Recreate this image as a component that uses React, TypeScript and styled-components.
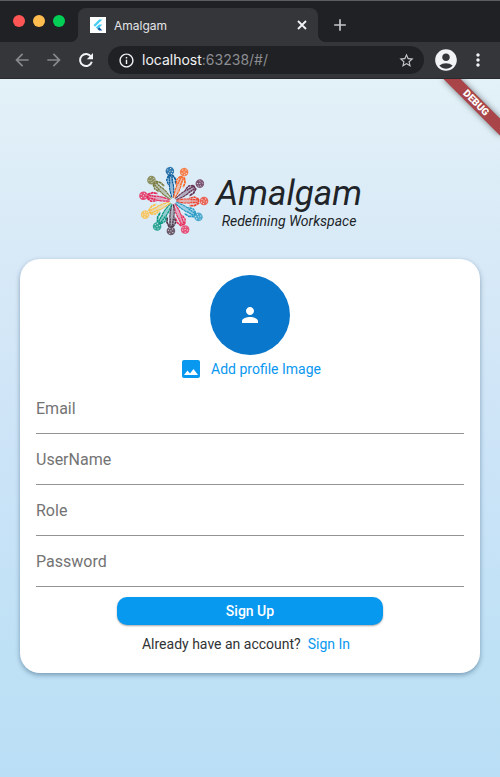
import React, { useState } from "react";
import styled, { createGlobalStyle } from "styled-components";
import {
  MdAccountCircle,
  MdAdd,
  MdArrowBack,
  MdArrowForward,
  MdImage,
  MdInfoOutline,
  MdMoreVert,
  MdPerson,
  MdStarBorder,
} from "react-icons/md";

const GlobalStyle = createGlobalStyle`
  *, *::before, *::after { box-sizing: border-box; }
  body { margin: 0; background: #202124; }
  button, input { font: inherit; color: inherit; margin: 0; }
`;

const Window = styled.div`
  display: flex;
  flex-direction: column;
  min-height: 100vh;
  border-top: 1px solid #5b5d5f;
  font-family: Roboto, sans-serif;
`;

const TabStrip = styled.header`
  display: flex;
  align-items: flex-end;
  height: 41px;
  background: #202124;
  font-family: Inter, sans-serif;
`;

const Lights = styled.div`
  display: flex;
  align-self: center;
  gap: 8px;
  padding: 0 13px 2px;
`;

const Light = styled.button<{ $color: string }>`
  width: 12px;
  height: 12px;
  padding: 0;
  border: 0;
  border-radius: 50%;
  background: ${(p) => p.$color};
`;

const Tab = styled.div`
  position: relative;
  display: flex;
  align-items: center;
  flex: 0 1 240px;
  height: 34px;
  padding: 0 8px 0 12px;
  border-radius: 8px 8px 0 0;
  background: #35363a;
  color: #e4e5e8;
  font-size: 12px;

  &::before,
  &::after {
    content: "";
    position: absolute;
    bottom: 0;
    width: 8px;
    height: 8px;
  }
  &::before {
    right: 100%;
    background: radial-gradient(circle at 0 0, #202124 8px, #35363a 8px);
  }
  &::after {
    left: 100%;
    background: radial-gradient(circle at 100% 0, #202124 8px, #35363a 8px);
  }
`;

const TabTitle = styled.span`
  flex: 1;
  padding-left: 8px;
`;

const IconButton = styled.button<{ $size: number; $color: string }>`
  display: flex;
  flex: none;
  align-items: center;
  justify-content: center;
  width: ${(p) => p.$size}px;
  height: ${(p) => p.$size}px;
  padding: 0;
  border: 0;
  background: none;
  color: ${(p) => p.$color};
`;

const NewTab = styled(IconButton)`
  margin: 0 0 7px 12px;
`;

const Toolbar = styled.nav`
  display: flex;
  align-items: center;
  height: 37px;
  padding: 0 12px;
  border-bottom: 1px solid #292a2d;
  background: #35363a;
  font-family: Inter, sans-serif;
`;

const NavButtons = styled.div`
  display: flex;
  gap: 12px;
  padding-right: 12px;
`;

const AddressBar = styled.div`
  display: flex;
  flex: 1;
  align-items: center;
  min-width: 0;
  height: 28px;
  padding: 0 9px;
  margin-right: 9px;
  border-radius: 14px;
  background: #202124;
`;

const AddressText = styled.button`
  flex: 1;
  padding: 0 0 0 7px;
  border: 0;
  background: none;
  color: #8b8d91;
  font-size: 14px;
  line-height: 20px;
  text-align: left;
`;

const AddressInput = styled.input`
  flex: 1;
  min-width: 0;
  padding: 0 0 0 7px;
  border: 0;
  outline: 0;
  background: none;
  color: #e8eaed;
  font-size: 14px;
  line-height: 20px;
`;

const Host = styled.span`
  color: #f1f3f4;
`;

const Profile = styled(IconButton)`
  margin-right: 9px;
`;

const Page = styled.main`
  position: relative;
  display: flex;
  flex: 1;
  flex-direction: column;
  align-items: center;
  padding: 86px 20px 24px;
  overflow: hidden;
  background: linear-gradient(#e3f1f8, #d7e9f7 27%, #cae3f7 58%, #bee1f5 84%, #badef5);
`;

const Ribbon = styled.div`
  position: absolute;
  top: 18px;
  right: -16px;
  width: 80px;
  transform: rotate(45deg);
  background: #a94548;
  box-shadow: 0 0 6px rgba(0, 0, 0, 0.5);
  color: #fff;
  font-size: 10px;
  font-weight: 900;
  line-height: 12px;
  text-align: center;
`;

const Brand = styled.div`
  display: flex;
  align-items: center;
  gap: 6px;
  margin-bottom: 22px;
  color: #202428;
  font-style: italic;
`;

const BrandText = styled.div`
  display: flex;
  flex-direction: column;
  align-items: center;
`;

const BrandName = styled.h1`
  margin: 0;
  font-size: 35px;
  font-weight: 400;
  line-height: 40px;
`;

const Tagline = styled.p`
  margin: 0;
  font-size: 14px;
  line-height: 14px;
`;

const Card = styled.form`
  display: flex;
  flex-direction: column;
  align-items: center;
  width: 100%;
  padding: 16px 16px 19px;
  border-radius: 20px;
  background: #fff;
  box-shadow: 0 2px 5px rgba(0, 40, 80, 0.38);
  color: #303234;
  font-size: 14px;
`;

const Avatar = styled.div`
  display: flex;
  align-items: center;
  justify-content: center;
  width: 80px;
  height: 80px;
  border-radius: 50%;
  background: #0877cc;
  color: #fff;
`;

const AddImage = styled.button`
  display: flex;
  align-items: center;
  gap: 8px;
  height: 28px;
  padding: 0;
  border: 0;
  background: none;
  color: #0998f0;
`;

const Field = styled.input`
  width: 100%;
  height: 51px;
  padding: 0;
  border: 0;
  border-bottom: 1px solid #939393;
  border-radius: 0;
  outline: 0;
  background: none;
  font-size: 16px;

  &::placeholder {
    color: #737373;
    opacity: 1;
  }
`;

const SignUp = styled.button`
  width: 62%;
  height: 28px;
  margin: 10px 0 9px;
  padding: 0;
  border: 0;
  border-radius: 10px;
  background: #0798f0;
  box-shadow: 0 1px 2px rgba(0, 0, 0, 0.35);
  color: #fff;
  font-weight: 500;
`;

const SignInRow = styled.p`
  display: flex;
  gap: 7px;
  margin: 0;
  padding-right: 8px;
  line-height: 20px;
`;

const SignInLink = styled.a`
  color: #0998f0;
  text-decoration: none;
`;

const figures = [
  { color: "#075b9c", angle: -6, reach: 30 },
  { color: "#fc6420", angle: 21, reach: 31 },
  { color: "#653052", angle: 57, reach: 32 },
  { color: "#ee4530", angle: 90, reach: 31 },
  { color: "#2499c3", angle: 122, reach: 30 },
  { color: "#ea2b59", angle: 157, reach: 31 },
  { color: "#503849", angle: 184, reach: 30 },
  { color: "#079680", angle: 212, reach: 30 },
  { color: "#fdbd42", angle: 244, reach: 31 },
  { color: "#e62254", angle: 280, reach: 30 },
  { color: "#78793b", angle: 314, reach: 30 },
];

function AmalgamLogo() {
  return (
    <svg width="72" height="72" viewBox="-35 -36 72 72" role="img" aria-label="Amalgam">
      {figures.map(({ color, angle, reach }) => (
        <g key={angle} transform={`rotate(${angle})`} fill="none" stroke={color}>
          <circle cy={-reach} r="4.3" fill={color} fillOpacity=".8" stroke="none" />
          <path
            d={`M-2.5 ${-reach - 1.5}h1M.5 ${-reach - 2.5}h1M-.5 ${-reach}h1M2 ${-reach + 0.5}h1M-2 ${-reach + 2}h1M.8 ${-reach + 2.5}h1`}
            stroke="#e8f2f8"
            strokeWidth=".9"
          />
          <path
            d="M-2.5 -26L2.5 -26L2.4 -17L1.8 -10L.5 -3L0 -11L-.5 -3L-1.8 -10L-2.4 -17Z"
            fill={color}
            fillOpacity=".35"
            stroke="none"
          />
          <path d="M-2 -25.5L2.4 -25.5L4.6 -21.5L4.6 -16.5" strokeWidth="1.7" strokeDasharray="3 .4" />
          <path d="M-2 -25.5L-4 -21.5L-2.8 -16.5" strokeWidth="1.5" strokeDasharray="2.5 .5" />
          <path d="M-1.2 -24.5L-1.6 -17M1.4 -24.5L1.5 -17" strokeWidth="1.4" strokeDasharray="2 .5" />
          <path d="M-2 -17L-2 -11L-.7 -3M2 -17L2 -11L.7 -3" strokeWidth="1.1" strokeDasharray="3 .4" />
        </g>
      ))}
    </svg>
  );
}

function FlutterIcon() {
  return (
    <svg width="16" height="16" viewBox="0 0 16 16" aria-hidden="true">
      <path fill="#fff" d="M0 0h16v16H0z" />
      <path fill="#45cdf8" d="M9.1 2.5h3.3L5.1 9.8 3.5 8.2z" />
      <path fill="#45cdf8" d="M9.1 7.5h3.3L9.2 10.7 7.5 12 5.8 10.4z" />
      <path fill="#10589b" d="M7.5 12l1.7-1.7 3.2 3.2H9.1z" />
    </svg>
  );
}

function CloseIcon() {
  return (
    <svg width="16" height="16" viewBox="0 0 16 16" fill="none" stroke="currentColor" strokeWidth="1.8" aria-hidden="true">
      <path d="M4 4l8 8M12 4l-8 8" />
    </svg>
  );
}

function ReloadIcon() {
  return (
    <svg width="20" height="20" viewBox="0 0 20 20" fill="none" aria-hidden="true">
      <path d="M15.1 6.8A6 6 0 1 0 15.8 11.8" stroke="currentColor" strokeWidth="2" />
      <path d="M17 3v6.2h-6.2z" fill="currentColor" />
    </svg>
  );
}

function Address() {
  const [editing, setEditing] = useState(false);
  const [address, setAddress] = useState("localhost:63238/#/");
  const split = address.indexOf(":");
  if (editing) {
    return (
      <AddressInput
        autoFocus
        aria-label="Address"
        value={address}
        onChange={(e) => setAddress(e.target.value)}
        onBlur={() => setEditing(false)}
      />
    );
  }
  return (
    <AddressText type="button" onClick={() => setEditing(true)}>
      <Host>{split < 0 ? address : address.slice(0, split)}</Host>
      {split < 0 ? "" : address.slice(split)}
    </AddressText>
  );
}

const fields = [
  { label: "Email", type: "email" },
  { label: "UserName", type: "text" },
  { label: "Role", type: "text" },
  { label: "Password", type: "password" },
];

export default function App() {
  return (
    <Window>
      <GlobalStyle />
      <TabStrip>
        <Lights>
          <Light $color="#ff5655" aria-label="Close window" />
          <Light $color="#ffbd4f" aria-label="Minimize window" />
          <Light $color="#00ce55" aria-label="Zoom window" />
        </Lights>
        <Tab>
          <FlutterIcon />
          <TabTitle>Amalgam</TabTitle>
          <IconButton $size={16} $color="#f1f3f4" aria-label="Close tab">
            <CloseIcon />
          </IconButton>
        </Tab>
        <NewTab $size={20} $color="#c4c6c9" aria-label="New tab">
          <MdAdd size={20} />
        </NewTab>
      </TabStrip>
      <Toolbar>
        <NavButtons>
          <IconButton $size={20} $color="#88898c" aria-label="Back">
            <MdArrowBack size={20} />
          </IconButton>
          <IconButton $size={20} $color="#88898c" aria-label="Forward">
            <MdArrowForward size={20} />
          </IconButton>
          <IconButton $size={20} $color="#f1f3f4" aria-label="Reload">
            <ReloadIcon />
          </IconButton>
        </NavButtons>
        <AddressBar>
          <IconButton $size={18} $color="#f1f3f4" aria-label="Site information">
            <MdInfoOutline size={17} />
          </IconButton>
          <Address />
          <IconButton $size={18} $color="#c4c6c9" aria-label="Bookmark">
            <MdStarBorder size={17} />
          </IconButton>
        </AddressBar>
        <Profile $size={26} $color="#f1f3f4" aria-label="Profile">
          <MdAccountCircle size={26} />
        </Profile>
        <IconButton $size={20} $color="#f1f3f4" aria-label="Menu">
          <MdMoreVert size={20} />
        </IconButton>
      </Toolbar>
      <Page>
        <Brand>
          <AmalgamLogo />
          <BrandText>
            <BrandName>Amalgam</BrandName>
            <Tagline>Redefining Workspace</Tagline>
          </BrandText>
        </Brand>
        <Card onSubmit={(e) => e.preventDefault()}>
          <Avatar>
            <MdPerson size={24} />
          </Avatar>
          <AddImage type="button">
            <MdImage size={24} />
            Add profile Image
          </AddImage>
          {fields.map(({ label, type }) => (
            <Field key={label} type={type} placeholder={label} aria-label={label} />
          ))}
          <SignUp type="submit">Sign Up</SignUp>
          <SignInRow>
            Already have an account?
            <SignInLink href="#/signin">Sign In</SignInLink>
          </SignInRow>
        </Card>
        <Ribbon>DEBUG</Ribbon>
      </Page>
    </Window>
  );
}
